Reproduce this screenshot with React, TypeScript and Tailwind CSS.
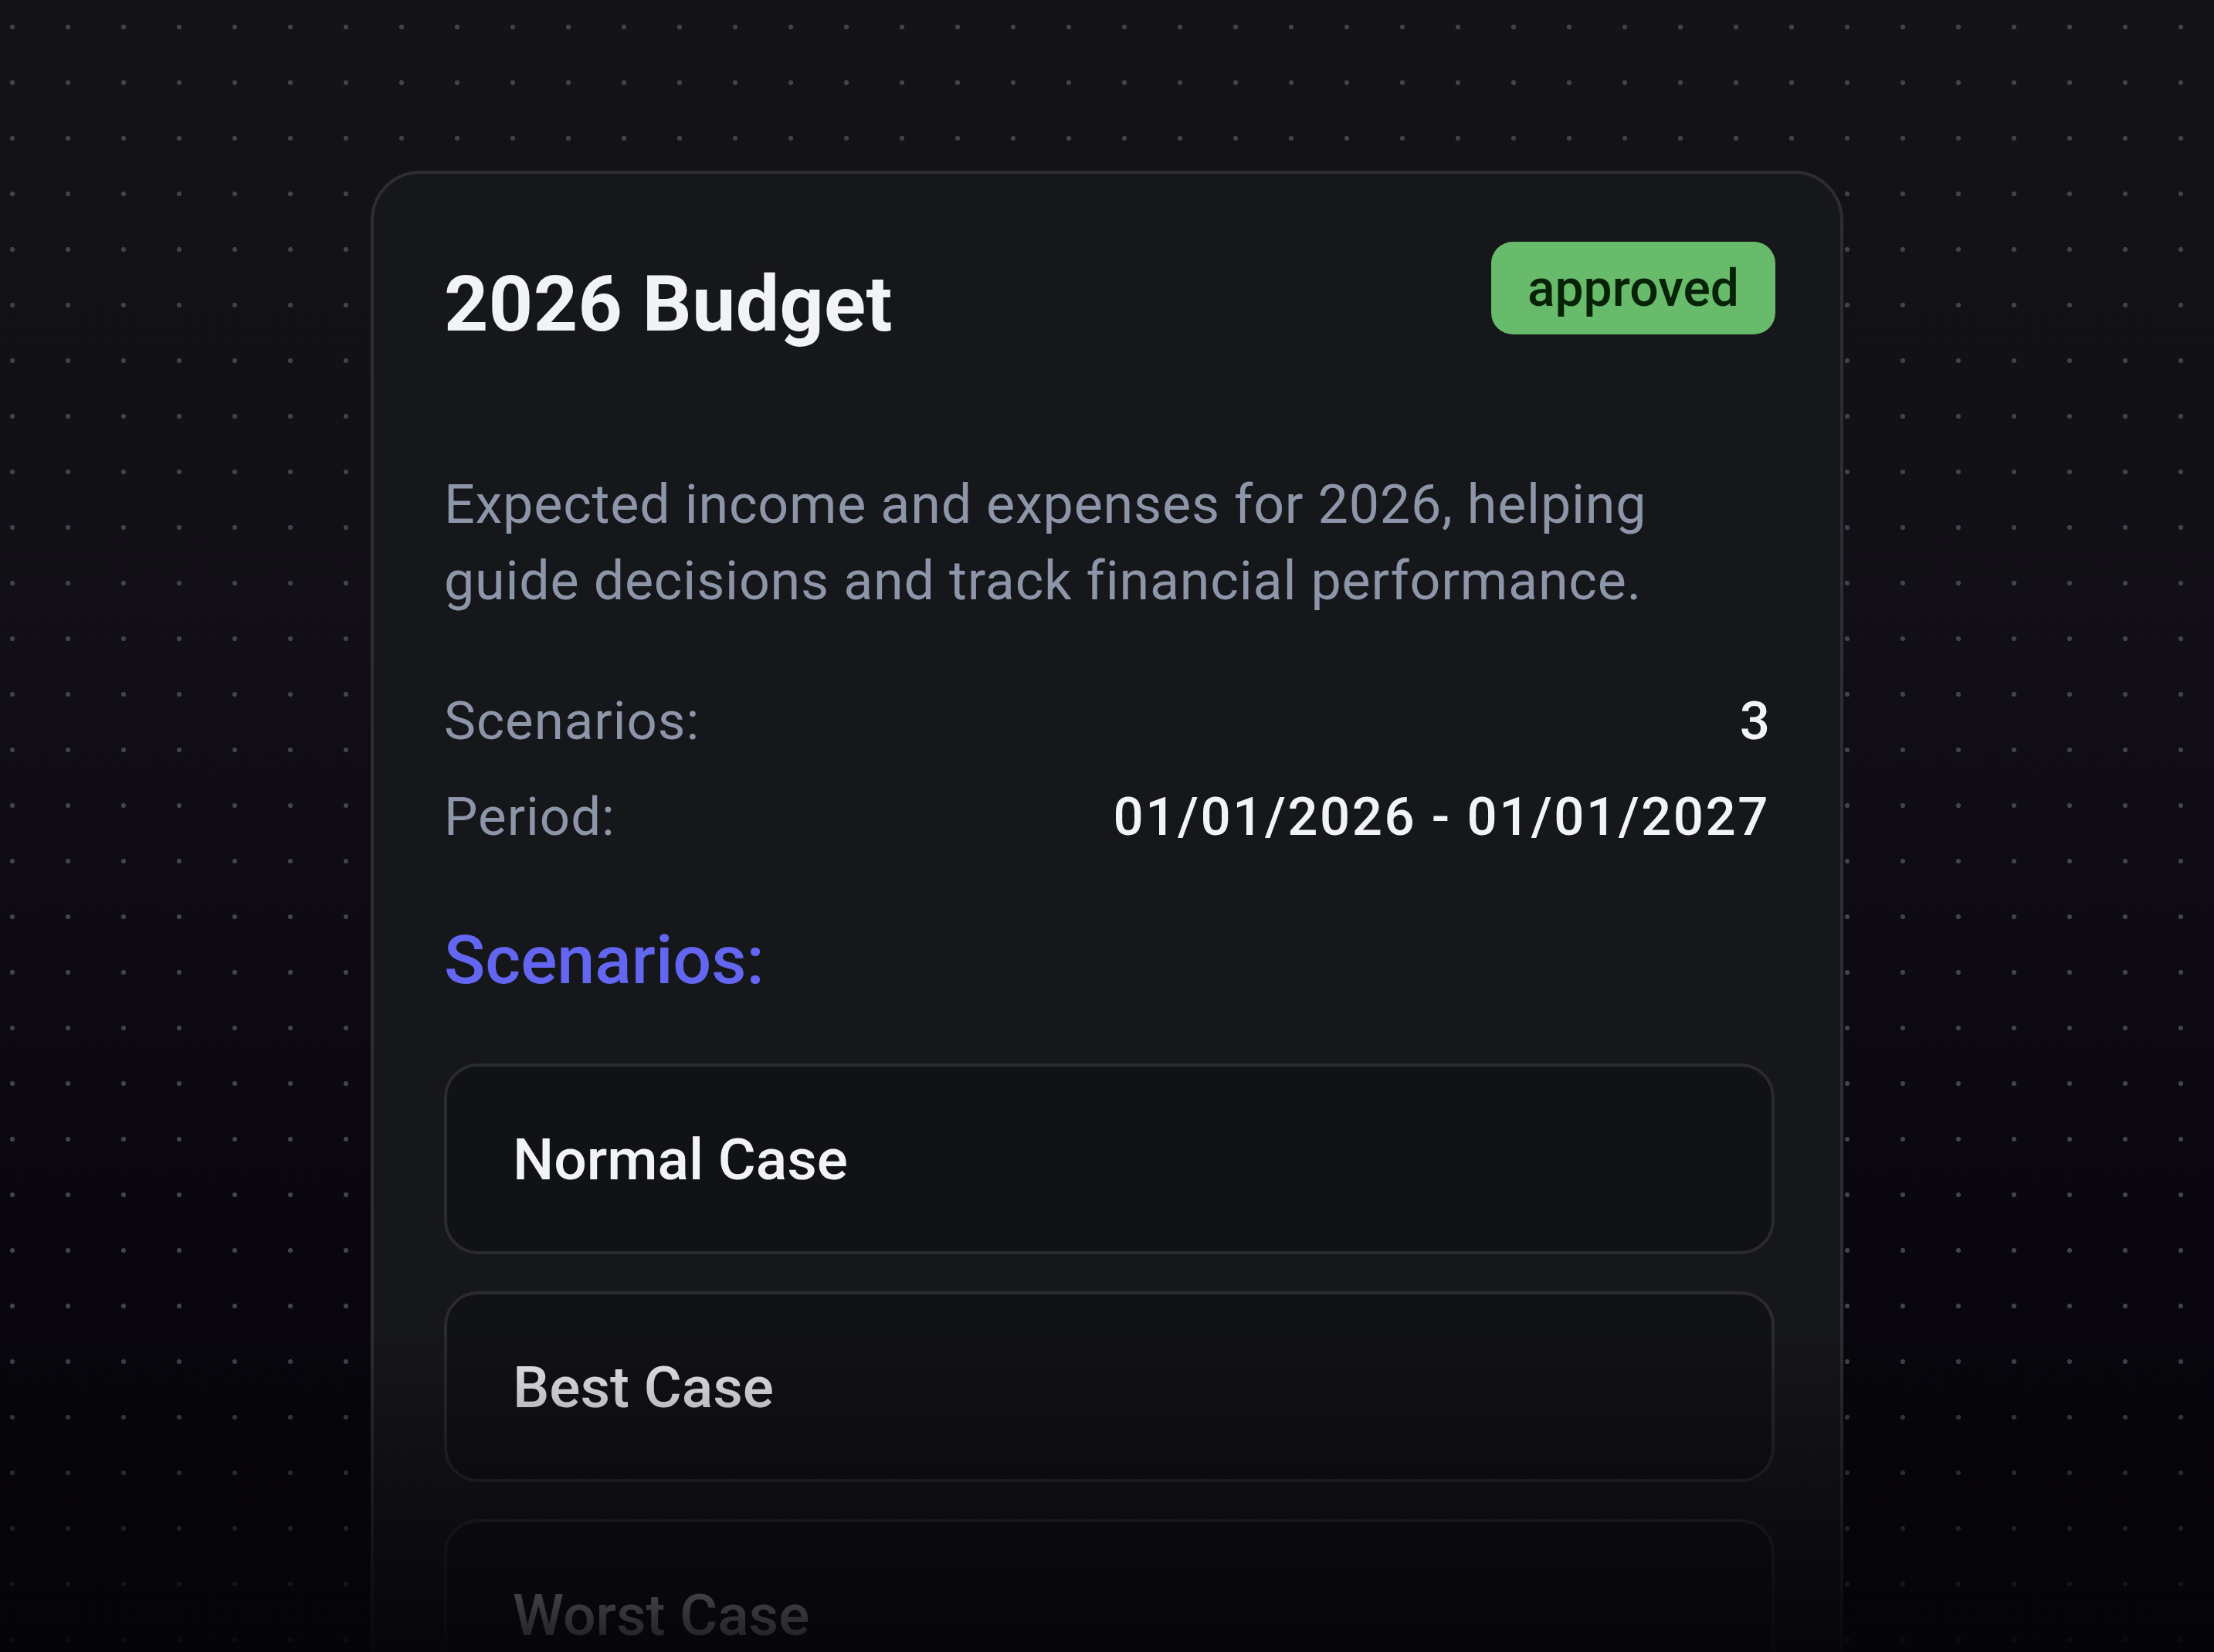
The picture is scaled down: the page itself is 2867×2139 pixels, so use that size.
const scenarios = ["Normal Case", "Best Case", "Worst Case"]

export default function App() {
  return (
    <div className="relative h-[2139px] overflow-hidden bg-[linear-gradient(180deg,#141318_0%,#121016_35%,#0d0a11_58%,#0a0610_75%,#060508_100%)] font-['Roboto',sans-serif]">
      {/* dot grid */}
      <div className="absolute inset-0 bg-[radial-gradient(circle,#43424a_2.8px,transparent_3.5px)] bg-[length:72px_72px] bg-[position:-20px_-1px]" />

      <div className="relative pt-[221px]">
        <div className="mx-auto w-[1907px] rounded-[64px] border-4 border-[#2c2e33] bg-[#16171b] px-[91px] pt-[88px] pb-[200px]">
          {/* Header */}
          <div className="flex items-start justify-between">
            <h1 className="mt-[21px] text-[100px] leading-[120px] font-bold tracking-[0.5px] text-[#f1f3f9]">2026 Budget</h1>
            <span className="-mr-[7px] flex h-[120px] items-center rounded-[28px] bg-[#68bb6b] px-[47px] text-[66px] font-medium text-[#072207]">
              approved
            </span>
          </div>

          <p className="mt-[150px] max-w-[1640px] text-[70px] leading-[99px] tracking-[0.8px] text-[#8d95a8]">
            Expected income and expenses for 2026, helping guide decisions and track financial performance.
          </p>

          {/* Meta */}
          <div className="mt-[70px] text-[69px] leading-[124px]">
            <div className="flex justify-between">
              <span className="tracking-[1px] text-[#8d95a8]">Scenarios:</span>
              <span className="font-medium text-[#f1f3f9]">3</span>
            </div>
            <div className="flex justify-between">
              <span className="tracking-[1px] text-[#8d95a8]">Period:</span>
              <span className="font-medium tracking-[2.5px] text-[#f1f3f9]">01/01/2026 - 01/01/2027</span>
            </div>
          </div>

          <h2 className="mt-[73px] text-[88px] leading-[100px] font-medium text-[#6366f1]">Scenarios:</h2>

          <div className="-mr-[6px] mt-[84px] flex flex-col gap-[48px]">
            {scenarios.map((name) => (
              <div
                key={name}
                className="flex h-[247px] items-center rounded-[44px] border-4 border-[#2a2b2e] bg-[#111214] px-[85px]"
              >
                <span className="text-[75px] leading-[90px] font-medium text-[#f2f3f7]">{name}</span>
              </div>
            ))}
          </div>
        </div>
      </div>

      {/* bottom fade */}
      <div className="absolute inset-x-0 bottom-0 h-[420px] bg-gradient-to-b from-[#05040700] to-[#050407e8]" />
    </div>
  )
}
